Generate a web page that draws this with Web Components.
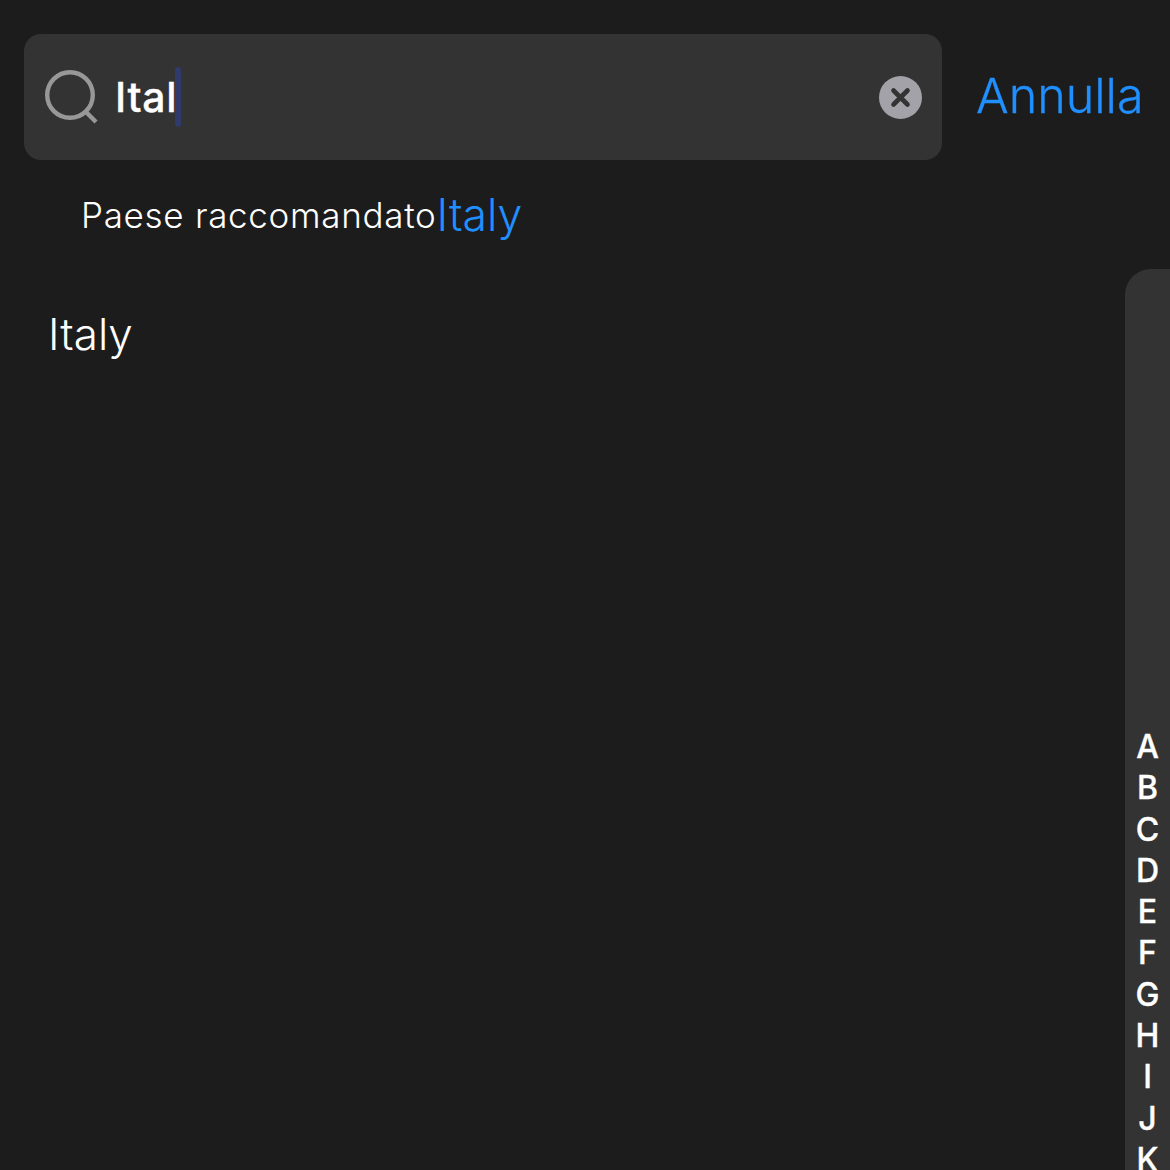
<!DOCTYPE html>
<html lang="it">
<head>
<meta charset="utf-8">
<title>Paese</title>
<style>
  html, body { margin: 0; height: 1170px; overflow: hidden; background: #1c1c1c; }
</style>
</head>
<body>
<country-picker></country-picker>
<script>
class SearchBar extends HTMLElement {
  constructor() {
    super();
    this.attachShadow({ mode: "open" });
  }

  connectedCallback() {
    const value = this.getAttribute("value") || "";
    this.shadowRoot.innerHTML = `
      <style>
        :host {
          display: flex;
          align-items: center;
          box-sizing: border-box;
          width: 918px;
          height: 126px;
          padding: 0 20px 0 20px;
          background: #333333;
          border-radius: 17px;
        }
        .icon { width: 54px; height: 54px; flex: none; display: block; }
        .value {
          margin-left: 17px;
          font: 500 41px/1 Inter, sans-serif;
          color: #fff;
          letter-spacing: 0.7px;
          -webkit-text-stroke: 0.3px #fff;
        }
        .caret {
          width: 6px;
          height: 60px;
          margin-left: -2px;
          border-radius: 3px;
          background: #303a6b;
        }
        .clear { margin-left: auto; width: 43px; height: 43px; flex: none; display: block; }
      </style>
      <svg class="icon" viewBox="0 0 54 54" fill="none" stroke="#989898" stroke-width="4.4">
        <circle cx="26" cy="25" r="22.8"/>
        <path d="M42 42 L52 52"/>
      </svg>
      <span class="value">${value}</span>
      <span class="caret"></span>
      <svg class="clear" viewBox="0 0 43 43">
        <circle cx="21.5" cy="21.5" r="21.5" fill="#a3a2a8"/>
        <path d="M14.5 14.5 L28.5 28.5 M28.5 14.5 L14.5 28.5" stroke="#333" stroke-width="4.6" stroke-linecap="round"/>
      </svg>
    `;
  }
}

class RecommendedRow extends HTMLElement {
  constructor() {
    super();
    this.attachShadow({ mode: "open" });
  }

  connectedCallback() {
    this.shadowRoot.innerHTML = `
      <style>
        :host {
          display: flex;
          align-items: center;
          height: 44px;
          padding-left: 81px;
          color: #fff;
        }
        .label { font: 300 35px/44px Inter, sans-serif; letter-spacing: 0.7px; }
        .country { font: 300 44.5px/46px Inter, sans-serif; color: #208fff; }
      </style>
      <span class="label"><slot name="label"></slot></span>
      <span class="country"><slot name="country"></slot></span>
    `;
  }
}

class IndexRail extends HTMLElement {
  constructor() {
    super();
    this.attachShadow({ mode: "open" });
  }

  connectedCallback() {
    const letters = this.getAttribute("letters").split("");
    this.shadowRoot.innerHTML = `
      <style>
        :host {
          display: block;
          box-sizing: border-box;
          width: 45px;
          height: 1000px;
          padding-top: 457px;
          flex: none;
          background: #333333;
          border-radius: 26px 0 0 0;
        }
        div {
          height: 41.3px;
          text-align: center;
          font: 500 32px/41.3px Inter, sans-serif;
          -webkit-text-stroke: 0.35px #fff;
          color: #fff;
        }
      </style>
      ${letters.map((l) => `<div>${l}</div>`).join("")}
    `;
  }
}

class CountryPicker extends HTMLElement {
  constructor() {
    super();
    this.attachShadow({ mode: "open" });
  }

  connectedCallback() {
    this.shadowRoot.innerHTML = `
      <style>
        :host {
          display: block;
          height: 1170px;
          overflow: hidden;
          background: #1c1c1c;
          font-family: Inter, sans-serif;
        }
        header {
          display: flex;
          align-items: center;
          padding: 34px 0 0 24px;
        }
        .cancel {
          margin-left: 34px;
          margin-top: -2px;
          font: 300 48.5px/1 Inter, sans-serif;
          -webkit-text-stroke: 0.3px #208fff;
          color: #208fff;
        }
        recommended-row { margin-top: 33px; }
        .body {
          display: flex;
          justify-content: space-between;
          align-items: flex-start;
          margin-top: 32px;
        }
        .result {
          margin-top: 39px;
          padding-left: 48px;
          font: 300 44px/52px Inter, sans-serif;
          color: #fff;
        }
      </style>
      <header>
        <search-bar value="Ital"></search-bar>
        <span class="cancel">Annulla</span>
      </header>
      <recommended-row>
        <span slot="label">Paese raccomandato</span>
        <span slot="country">Italy</span>
      </recommended-row>
      <div class="body">
        <div class="result">Italy</div>
        <index-rail letters="ABCDEFGHIJK"></index-rail>
      </div>
    `;
  }
}

customElements.define("search-bar", SearchBar);
customElements.define("recommended-row", RecommendedRow);
customElements.define("index-rail", IndexRail);
customElements.define("country-picker", CountryPicker);
</script>
</body>
</html>
